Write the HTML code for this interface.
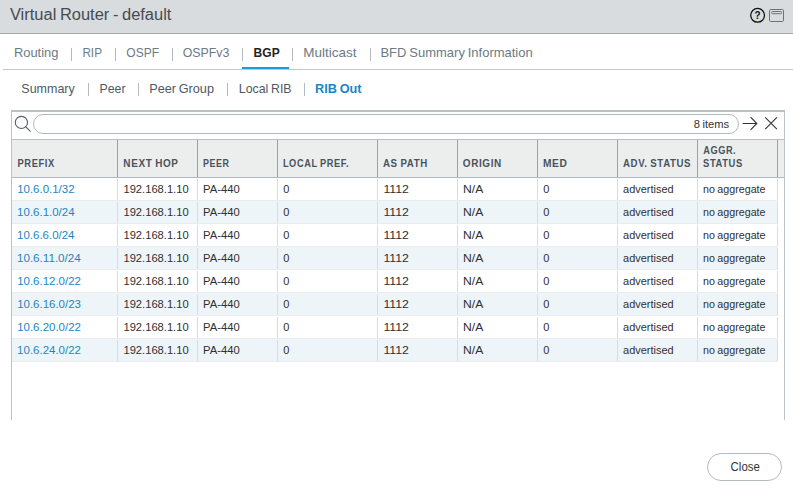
<!DOCTYPE html>
<html><head><meta charset="utf-8"><title>Virtual Router - default</title>
<style>
*{box-sizing:border-box;margin:0;padding:0}
html,body{width:793px;height:491px;overflow:hidden;background:#fff}
body{font-family:"Liberation Sans",sans-serif;position:relative;color:#222}
.a,.t,.s,.hs,.cs,.r{position:absolute}
.t{white-space:nowrap;transform-origin:0 0}
#hdr{left:0;top:0;width:793px;height:34px;background:#d8dcdf;border-bottom:1px solid #a3a9ae}
.s{width:1px;height:13px;background:#b3bac0}
#tabline{left:3px;top:69px;width:790px;height:1px;background:#c4c8cb}
#bgpline{left:242px;top:67px;width:47px;height:2px;background:#1a9cde}
#grid{left:11px;top:110px;width:774px;height:310px;border-left:1px solid #bcc3c8;border-right:1px solid #bcc3c8;border-top:2px solid #b9c0c6}
#tbline{left:12px;top:139px;width:772px;height:1px;background:#b9c0c6}
#search{left:33px;top:114px;width:706px;height:20px;border:1px solid #b3bac0;border-radius:10px}
#ghead{left:12px;top:140px;width:772px;height:38px;background:#eceeee;border-bottom:1px solid #b3b9be}
.hs{top:140px;width:1px;height:37px;background:#9aa0a6}
.r{left:12px;width:766px;height:22px;background:#eef5f9}
.cs{width:1px;height:21px;background:#d9dde0}
#close{left:707px;top:453px;width:75px;height:28px;border:1px solid #b3bac0;border-radius:14px}

</style></head><body>
<div id="hdr" class="a"></div>
<svg class="a" style="left:748px;top:6px" width="40" height="20" viewBox="0 0 40 20"><circle cx="9.6" cy="9.3" r="6.9" fill="none" stroke="#111" stroke-width="1.3"/><rect x="21.5" y="3.5" width="14" height="12" rx="1.2" fill="none" stroke="#6b7278" stroke-width="1"/><rect x="23.7" y="5.5" width="9.8" height="2.2" rx="0.8" fill="none" stroke="#6b7278" stroke-width="1"/></svg>
<div class="s" style="left:71px;top:48px"></div>
<div class="s" style="left:115px;top:48px"></div>
<div class="s" style="left:172px;top:48px"></div>
<div class="s" style="left:242px;top:48px"></div>
<div class="s" style="left:292px;top:48px"></div>
<div class="s" style="left:370px;top:48px"></div>
<div id="tabline" class="a"></div><div id="bgpline" class="a"></div>
<div class="s" style="left:88px;top:83px"></div>
<div class="s" style="left:138px;top:83px"></div>
<div class="s" style="left:227px;top:83px"></div>
<div class="s" style="left:304px;top:83px"></div>
<div id="grid" class="a"></div><div id="tbline" class="a"></div><div id="search" class="a"></div>
<svg class="a" style="left:12px;top:112px" width="24" height="26" viewBox="0 0 24 26"><circle cx="9.4" cy="10.4" r="6.1" fill="none" stroke="#58646e" stroke-width="1.15"/><path d="M13.8 14.8 L18.6 19.7" stroke="#58646e" stroke-width="1.15" fill="none"/></svg>
<svg class="a" style="left:740px;top:114px" width="42" height="20" viewBox="0 0 42 20"><path d="M2.7 9.5H16.6M10.6 3.2L16.8 9.5L10.6 15.8M25.2 3.4L36.9 15.1M36.9 3.4L25.2 15.1" stroke="#333" stroke-width="1.1" fill="none"/></svg>
<div id="ghead" class="a"></div>
<div class="r" style="top:200px;height:1px;background:#ececec"></div>
<div class="r" style="top:201px"></div>
<div class="r" style="top:223px;height:1px;background:#ececec"></div>
<div class="r" style="top:246px;height:1px;background:#ececec"></div>
<div class="r" style="top:247px"></div>
<div class="r" style="top:269px;height:1px;background:#ececec"></div>
<div class="r" style="top:292px;height:1px;background:#ececec"></div>
<div class="r" style="top:293px"></div>
<div class="r" style="top:315px;height:1px;background:#ececec"></div>
<div class="r" style="top:338px;height:1px;background:#ececec"></div>
<div class="r" style="top:339px"></div>
<div class="r" style="top:361px;height:1px;background:#ececec"></div>
<div class="hs" style="left:117px"></div>
<div class="cs" style="left:117px;top:179px"></div>
<div class="cs" style="left:117px;top:202px"></div>
<div class="cs" style="left:117px;top:225px"></div>
<div class="cs" style="left:117px;top:248px"></div>
<div class="cs" style="left:117px;top:271px"></div>
<div class="cs" style="left:117px;top:294px"></div>
<div class="cs" style="left:117px;top:317px"></div>
<div class="cs" style="left:117px;top:340px"></div>
<div class="hs" style="left:197px"></div>
<div class="cs" style="left:197px;top:179px"></div>
<div class="cs" style="left:197px;top:202px"></div>
<div class="cs" style="left:197px;top:225px"></div>
<div class="cs" style="left:197px;top:248px"></div>
<div class="cs" style="left:197px;top:271px"></div>
<div class="cs" style="left:197px;top:294px"></div>
<div class="cs" style="left:197px;top:317px"></div>
<div class="cs" style="left:197px;top:340px"></div>
<div class="hs" style="left:277px"></div>
<div class="cs" style="left:277px;top:179px"></div>
<div class="cs" style="left:277px;top:202px"></div>
<div class="cs" style="left:277px;top:225px"></div>
<div class="cs" style="left:277px;top:248px"></div>
<div class="cs" style="left:277px;top:271px"></div>
<div class="cs" style="left:277px;top:294px"></div>
<div class="cs" style="left:277px;top:317px"></div>
<div class="cs" style="left:277px;top:340px"></div>
<div class="hs" style="left:377px"></div>
<div class="cs" style="left:377px;top:179px"></div>
<div class="cs" style="left:377px;top:202px"></div>
<div class="cs" style="left:377px;top:225px"></div>
<div class="cs" style="left:377px;top:248px"></div>
<div class="cs" style="left:377px;top:271px"></div>
<div class="cs" style="left:377px;top:294px"></div>
<div class="cs" style="left:377px;top:317px"></div>
<div class="cs" style="left:377px;top:340px"></div>
<div class="hs" style="left:457px"></div>
<div class="cs" style="left:457px;top:179px"></div>
<div class="cs" style="left:457px;top:202px"></div>
<div class="cs" style="left:457px;top:225px"></div>
<div class="cs" style="left:457px;top:248px"></div>
<div class="cs" style="left:457px;top:271px"></div>
<div class="cs" style="left:457px;top:294px"></div>
<div class="cs" style="left:457px;top:317px"></div>
<div class="cs" style="left:457px;top:340px"></div>
<div class="hs" style="left:537px"></div>
<div class="cs" style="left:537px;top:179px"></div>
<div class="cs" style="left:537px;top:202px"></div>
<div class="cs" style="left:537px;top:225px"></div>
<div class="cs" style="left:537px;top:248px"></div>
<div class="cs" style="left:537px;top:271px"></div>
<div class="cs" style="left:537px;top:294px"></div>
<div class="cs" style="left:537px;top:317px"></div>
<div class="cs" style="left:537px;top:340px"></div>
<div class="hs" style="left:617px"></div>
<div class="cs" style="left:617px;top:179px"></div>
<div class="cs" style="left:617px;top:202px"></div>
<div class="cs" style="left:617px;top:225px"></div>
<div class="cs" style="left:617px;top:248px"></div>
<div class="cs" style="left:617px;top:271px"></div>
<div class="cs" style="left:617px;top:294px"></div>
<div class="cs" style="left:617px;top:317px"></div>
<div class="cs" style="left:617px;top:340px"></div>
<div class="hs" style="left:697px"></div>
<div class="cs" style="left:697px;top:179px"></div>
<div class="cs" style="left:697px;top:202px"></div>
<div class="cs" style="left:697px;top:225px"></div>
<div class="cs" style="left:697px;top:248px"></div>
<div class="cs" style="left:697px;top:271px"></div>
<div class="cs" style="left:697px;top:294px"></div>
<div class="cs" style="left:697px;top:317px"></div>
<div class="cs" style="left:697px;top:340px"></div>
<div class="hs" style="left:777px"></div>
<div class="cs" style="left:777px;top:179px"></div>
<div class="cs" style="left:777px;top:202px"></div>
<div class="cs" style="left:777px;top:225px"></div>
<div class="cs" style="left:777px;top:248px"></div>
<div class="cs" style="left:777px;top:271px"></div>
<div class="cs" style="left:777px;top:294px"></div>
<div class="cs" style="left:777px;top:317px"></div>
<div class="cs" style="left:777px;top:340px"></div>
<div id="close" class="a"></div>
<div class="t" id="title" style="left:10.50px;top:5px;font-size:16px;line-height:20px;color:#464b50;word-spacing:-0.96px;transform:translateX(-1.09px) scaleX(1.0293);">Virtual Router - default</div>
<div class="t" id="qq" style="left:754.20px;top:9px;font-size:11.5px;line-height:12px;color:#111;font-weight:bold;transform:translateX(0.5px) scaleX(.86);">?</div>
<div class="t" id="tab0" style="left:14.00px;top:45px;font-size:13px;line-height:16px;color:#6d7a86;transform:translateX(-0.01px) scaleX(0.9902);">Routing</div>
<div class="t" id="tab1" style="left:82.50px;top:45px;font-size:13.5px;line-height:16px;color:#6d7a86;transform:translateX(-0.61px) scaleX(0.8702);">RIP</div>
<div class="t" id="tab2" style="left:126.00px;top:45px;font-size:13.5px;line-height:16px;color:#6d7a86;transform:translateX(0.35px) scaleX(0.8874);">OSPF</div>
<div class="t" id="tab3" style="left:183.00px;top:45px;font-size:13px;line-height:16px;color:#6d7a86;transform:translateX(-0.26px) scaleX(0.9501);">OSPFv3</div>
<div class="t" id="tab4" style="left:253.60px;top:45px;font-size:13.5px;line-height:16px;color:#222;font-weight:bold;transform:translateX(-0.38px) scaleX(0.89);">BGP</div>
<div class="t" id="tab5" style="left:303.40px;top:45px;font-size:13px;line-height:16px;color:#6d7a86;transform:translateX(0.35px) scaleX(1.0381);">Multicast</div>
<div class="t" id="tab6" style="left:381.00px;top:45px;font-size:13px;line-height:16px;color:#6d7a86;word-spacing:-0.78px;transform:translateX(-0.55px) scaleX(0.9997);">BFD Summary Information</div>
<div class="t" id="sub0" style="left:22.00px;top:81px;font-size:13px;line-height:16px;color:#4d5a66;transform:translateX(-0.67px) scaleX(0.961);">Summary</div>
<div class="t" id="sub1" style="left:99.60px;top:81px;font-size:13px;line-height:16px;color:#4d5a66;transform:translateX(-0.42px) scaleX(0.9443);">Peer</div>
<div class="t" id="sub2" style="left:149.50px;top:81px;font-size:13px;line-height:16px;color:#4d5a66;word-spacing:-0.78px;transform:translateX(-0.81px) scaleX(0.9746);">Peer Group</div>
<div class="t" id="sub3" style="left:238.30px;top:81px;font-size:13px;line-height:16px;color:#4d5a66;word-spacing:-0.78px;transform:translateX(0.76px) scaleX(0.9503);">Local RIB</div>
<div class="t" id="sub4" style="left:315.00px;top:81px;font-size:13px;line-height:16px;color:#1b86c4;font-weight:bold;word-spacing:-0.78px;transform:translateX(0.0px) scaleX(0.9774);">RIB Out</div>
<div class="t" id="items" style="left:693.62px;top:114px;font-size:11px;line-height:20px;color:#333;word-spacing:-0.66px;transform:translateX(-0.24px) scaleX(1.0166);">8 items</div>
<div class="t" id="h0" style="left:17.50px;top:157px;font-size:10px;line-height:13px;color:#4a545e;font-weight:bold;letter-spacing:0.62px;transform:translateX(-0.54px) scaleX(0.9383);">PREFIX</div>
<div class="t" id="h1" style="left:123.00px;top:157px;font-size:10px;line-height:13px;color:#4a545e;font-weight:bold;letter-spacing:0.62px;word-spacing:-0.6px;transform:translateX(0.36px) scaleX(0.9954);">NEXT HOP</div>
<div class="t" id="h2" style="left:203.00px;top:157px;font-size:10px;line-height:13px;color:#4a545e;font-weight:bold;letter-spacing:0.62px;transform:translateX(0px) scaleX(0.8931);">PEER</div>
<div class="t" id="h3" style="left:283.00px;top:157px;font-size:10px;line-height:13px;color:#4a545e;font-weight:bold;letter-spacing:0.62px;word-spacing:-0.6px;transform:translateX(-0.11px) scaleX(0.9249);">LOCAL PREF.</div>
<div class="t" id="h4" style="left:383.00px;top:157px;font-size:10px;line-height:13px;color:#4a545e;font-weight:bold;letter-spacing:0.62px;word-spacing:-0.6px;transform:translateX(0px) scaleX(0.9712);">AS PATH</div>
<div class="t" id="h5" style="left:463.00px;top:157px;font-size:10px;line-height:13px;color:#4a545e;font-weight:bold;letter-spacing:0.62px;transform:translateX(-0.23px) scaleX(0.9964);">ORIGIN</div>
<div class="t" id="h6" style="left:543.00px;top:157px;font-size:10px;line-height:13px;color:#4a545e;font-weight:bold;letter-spacing:0.62px;transform:translateX(-0.11px) scaleX(1.0246);">MED</div>
<div class="t" id="h7" style="left:623.00px;top:157px;font-size:10px;line-height:13px;color:#4a545e;font-weight:bold;letter-spacing:0.62px;word-spacing:-0.6px;transform:translateX(0.02px) scaleX(0.9658);">ADV. STATUS</div>
<div class="t" id="h8" style="left:703.00px;top:144px;font-size:10px;line-height:13px;color:#4a545e;font-weight:bold;letter-spacing:0.62px;transform:translateX(0.15px) scaleX(0.9225);">AGGR.</div>
<div class="t" id="h9" style="left:703.00px;top:157px;font-size:10px;line-height:13px;color:#4a545e;font-weight:bold;letter-spacing:0.62px;transform:translateX(0.11px) scaleX(0.9377);">STATUS</div>
<div class="t" id="p0" style="left:17.20px;top:178px;font-size:11px;line-height:22px;color:#1b86c4;transform:translateX(0.16px) scaleX(1.0428);">10.6.0.1/32</div>
<div class="t c1" style="left:123.00px;top:178px;font-size:11px;line-height:22px;color:#303030;transform:translateX(0.43px) scaleX(1.0153);">192.168.1.10</div>
<div class="t c2" style="left:203.00px;top:178px;font-size:11px;line-height:22px;color:#303030;transform:translateX(0px) scaleX(1.024);">PA-440</div>
<div class="t c3" style="left:283.00px;top:178px;font-size:11px;line-height:22px;color:#303030;transform:translateX(0.16px) scaleX(1);">0</div>
<div class="t c4" style="left:383.00px;top:178px;font-size:11px;line-height:22px;color:#303030;transform:translateX(0.38px) scaleX(1.1176);">1112</div>
<div class="t c5" style="left:463.00px;top:178px;font-size:11px;line-height:22px;color:#303030;transform:translateX(0.05px) scaleX(1.1014);">N/A</div>
<div class="t c6" style="left:543.00px;top:178px;font-size:11px;line-height:22px;color:#303030;transform:translateX(0.16px) scaleX(1);">0</div>
<div class="t c7" style="left:623.00px;top:178px;font-size:11px;line-height:22px;color:#303030;transform:translateX(0.09px) scaleX(0.9942);">advertised</div>
<div class="t c8" style="left:703.00px;top:178px;font-size:11px;line-height:22px;color:#303030;word-spacing:-0.66px;transform:translateX(0.03px) scaleX(0.974);">no aggregate</div>
<div class="t" id="p1" style="left:17.20px;top:201px;font-size:11px;line-height:22px;color:#1b86c4;transform:translateX(0.12px) scaleX(1.0428);">10.6.1.0/24</div>
<div class="t c1" style="left:123.00px;top:201px;font-size:11px;line-height:22px;color:#303030;transform:translateX(0.43px) scaleX(1.0153);">192.168.1.10</div>
<div class="t c2" style="left:203.00px;top:201px;font-size:11px;line-height:22px;color:#303030;transform:translateX(0px) scaleX(1.024);">PA-440</div>
<div class="t c3" style="left:283.00px;top:201px;font-size:11px;line-height:22px;color:#303030;transform:translateX(0.16px) scaleX(1);">0</div>
<div class="t c4" style="left:383.00px;top:201px;font-size:11px;line-height:22px;color:#303030;transform:translateX(0.38px) scaleX(1.1176);">1112</div>
<div class="t c5" style="left:463.00px;top:201px;font-size:11px;line-height:22px;color:#303030;transform:translateX(0.05px) scaleX(1.1014);">N/A</div>
<div class="t c6" style="left:543.00px;top:201px;font-size:11px;line-height:22px;color:#303030;transform:translateX(0.16px) scaleX(1);">0</div>
<div class="t c7" style="left:623.00px;top:201px;font-size:11px;line-height:22px;color:#303030;transform:translateX(0.09px) scaleX(0.9942);">advertised</div>
<div class="t c8" style="left:703.00px;top:201px;font-size:11px;line-height:22px;color:#303030;word-spacing:-0.66px;transform:translateX(0.03px) scaleX(0.974);">no aggregate</div>
<div class="t" id="p2" style="left:17.20px;top:224px;font-size:11px;line-height:22px;color:#1b86c4;transform:translateX(0.08px) scaleX(1.0428);">10.6.6.0/24</div>
<div class="t c1" style="left:123.00px;top:224px;font-size:11px;line-height:22px;color:#303030;transform:translateX(0.43px) scaleX(1.0153);">192.168.1.10</div>
<div class="t c2" style="left:203.00px;top:224px;font-size:11px;line-height:22px;color:#303030;transform:translateX(0px) scaleX(1.024);">PA-440</div>
<div class="t c3" style="left:283.00px;top:224px;font-size:11px;line-height:22px;color:#303030;transform:translateX(0.16px) scaleX(1);">0</div>
<div class="t c4" style="left:383.00px;top:224px;font-size:11px;line-height:22px;color:#303030;transform:translateX(0.38px) scaleX(1.1176);">1112</div>
<div class="t c5" style="left:463.00px;top:224px;font-size:11px;line-height:22px;color:#303030;transform:translateX(0.05px) scaleX(1.1014);">N/A</div>
<div class="t c6" style="left:543.00px;top:224px;font-size:11px;line-height:22px;color:#303030;transform:translateX(0.16px) scaleX(1);">0</div>
<div class="t c7" style="left:623.00px;top:224px;font-size:11px;line-height:22px;color:#303030;transform:translateX(0.09px) scaleX(0.9942);">advertised</div>
<div class="t c8" style="left:703.00px;top:224px;font-size:11px;line-height:22px;color:#303030;word-spacing:-0.66px;transform:translateX(0.03px) scaleX(0.974);">no aggregate</div>
<div class="t" id="p3" style="left:17.20px;top:247px;font-size:11px;line-height:22px;color:#1b86c4;transform:translateX(-0.05px) scaleX(1.0572);">10.6.11.0/24</div>
<div class="t c1" style="left:123.00px;top:247px;font-size:11px;line-height:22px;color:#303030;transform:translateX(0.43px) scaleX(1.0153);">192.168.1.10</div>
<div class="t c2" style="left:203.00px;top:247px;font-size:11px;line-height:22px;color:#303030;transform:translateX(0px) scaleX(1.024);">PA-440</div>
<div class="t c3" style="left:283.00px;top:247px;font-size:11px;line-height:22px;color:#303030;transform:translateX(0.16px) scaleX(1);">0</div>
<div class="t c4" style="left:383.00px;top:247px;font-size:11px;line-height:22px;color:#303030;transform:translateX(0.38px) scaleX(1.1176);">1112</div>
<div class="t c5" style="left:463.00px;top:247px;font-size:11px;line-height:22px;color:#303030;transform:translateX(0.05px) scaleX(1.1014);">N/A</div>
<div class="t c6" style="left:543.00px;top:247px;font-size:11px;line-height:22px;color:#303030;transform:translateX(0.16px) scaleX(1);">0</div>
<div class="t c7" style="left:623.00px;top:247px;font-size:11px;line-height:22px;color:#303030;transform:translateX(0.09px) scaleX(0.9942);">advertised</div>
<div class="t c8" style="left:703.00px;top:247px;font-size:11px;line-height:22px;color:#303030;word-spacing:-0.66px;transform:translateX(0.03px) scaleX(0.974);">no aggregate</div>
<div class="t" id="p4" style="left:17.20px;top:270px;font-size:11px;line-height:22px;color:#1b86c4;transform:translateX(0.14px) scaleX(1.0432);">10.6.12.0/22</div>
<div class="t c1" style="left:123.00px;top:270px;font-size:11px;line-height:22px;color:#303030;transform:translateX(0.43px) scaleX(1.0153);">192.168.1.10</div>
<div class="t c2" style="left:203.00px;top:270px;font-size:11px;line-height:22px;color:#303030;transform:translateX(0px) scaleX(1.024);">PA-440</div>
<div class="t c3" style="left:283.00px;top:270px;font-size:11px;line-height:22px;color:#303030;transform:translateX(0.16px) scaleX(1);">0</div>
<div class="t c4" style="left:383.00px;top:270px;font-size:11px;line-height:22px;color:#303030;transform:translateX(0.38px) scaleX(1.1176);">1112</div>
<div class="t c5" style="left:463.00px;top:270px;font-size:11px;line-height:22px;color:#303030;transform:translateX(0.05px) scaleX(1.1014);">N/A</div>
<div class="t c6" style="left:543.00px;top:270px;font-size:11px;line-height:22px;color:#303030;transform:translateX(0.16px) scaleX(1);">0</div>
<div class="t c7" style="left:623.00px;top:270px;font-size:11px;line-height:22px;color:#303030;transform:translateX(0.09px) scaleX(0.9942);">advertised</div>
<div class="t c8" style="left:703.00px;top:270px;font-size:11px;line-height:22px;color:#303030;word-spacing:-0.66px;transform:translateX(0.03px) scaleX(0.974);">no aggregate</div>
<div class="t" id="p5" style="left:17.20px;top:293px;font-size:11px;line-height:22px;color:#1b86c4;transform:translateX(0.13px) scaleX(1.0432);">10.6.16.0/23</div>
<div class="t c1" style="left:123.00px;top:293px;font-size:11px;line-height:22px;color:#303030;transform:translateX(0.43px) scaleX(1.0153);">192.168.1.10</div>
<div class="t c2" style="left:203.00px;top:293px;font-size:11px;line-height:22px;color:#303030;transform:translateX(0px) scaleX(1.024);">PA-440</div>
<div class="t c3" style="left:283.00px;top:293px;font-size:11px;line-height:22px;color:#303030;transform:translateX(0.16px) scaleX(1);">0</div>
<div class="t c4" style="left:383.00px;top:293px;font-size:11px;line-height:22px;color:#303030;transform:translateX(0.38px) scaleX(1.1176);">1112</div>
<div class="t c5" style="left:463.00px;top:293px;font-size:11px;line-height:22px;color:#303030;transform:translateX(0.05px) scaleX(1.1014);">N/A</div>
<div class="t c6" style="left:543.00px;top:293px;font-size:11px;line-height:22px;color:#303030;transform:translateX(0.16px) scaleX(1);">0</div>
<div class="t c7" style="left:623.00px;top:293px;font-size:11px;line-height:22px;color:#303030;transform:translateX(0.09px) scaleX(0.9942);">advertised</div>
<div class="t c8" style="left:703.00px;top:293px;font-size:11px;line-height:22px;color:#303030;word-spacing:-0.66px;transform:translateX(0.03px) scaleX(0.974);">no aggregate</div>
<div class="t" id="p6" style="left:17.20px;top:316px;font-size:11px;line-height:22px;color:#1b86c4;transform:translateX(0.15px) scaleX(1.0432);">10.6.20.0/22</div>
<div class="t c1" style="left:123.00px;top:316px;font-size:11px;line-height:22px;color:#303030;transform:translateX(0.43px) scaleX(1.0153);">192.168.1.10</div>
<div class="t c2" style="left:203.00px;top:316px;font-size:11px;line-height:22px;color:#303030;transform:translateX(0px) scaleX(1.024);">PA-440</div>
<div class="t c3" style="left:283.00px;top:316px;font-size:11px;line-height:22px;color:#303030;transform:translateX(0.16px) scaleX(1);">0</div>
<div class="t c4" style="left:383.00px;top:316px;font-size:11px;line-height:22px;color:#303030;transform:translateX(0.38px) scaleX(1.1176);">1112</div>
<div class="t c5" style="left:463.00px;top:316px;font-size:11px;line-height:22px;color:#303030;transform:translateX(0.05px) scaleX(1.1014);">N/A</div>
<div class="t c6" style="left:543.00px;top:316px;font-size:11px;line-height:22px;color:#303030;transform:translateX(0.16px) scaleX(1);">0</div>
<div class="t c7" style="left:623.00px;top:316px;font-size:11px;line-height:22px;color:#303030;transform:translateX(0.09px) scaleX(0.9942);">advertised</div>
<div class="t c8" style="left:703.00px;top:316px;font-size:11px;line-height:22px;color:#303030;word-spacing:-0.66px;transform:translateX(0.03px) scaleX(0.974);">no aggregate</div>
<div class="t" id="p7" style="left:17.20px;top:339px;font-size:11px;line-height:22px;color:#1b86c4;transform:translateX(0.12px) scaleX(1.0432);">10.6.24.0/22</div>
<div class="t c1" style="left:123.00px;top:339px;font-size:11px;line-height:22px;color:#303030;transform:translateX(0.43px) scaleX(1.0153);">192.168.1.10</div>
<div class="t c2" style="left:203.00px;top:339px;font-size:11px;line-height:22px;color:#303030;transform:translateX(0px) scaleX(1.024);">PA-440</div>
<div class="t c3" style="left:283.00px;top:339px;font-size:11px;line-height:22px;color:#303030;transform:translateX(0.16px) scaleX(1);">0</div>
<div class="t c4" style="left:383.00px;top:339px;font-size:11px;line-height:22px;color:#303030;transform:translateX(0.38px) scaleX(1.1176);">1112</div>
<div class="t c5" style="left:463.00px;top:339px;font-size:11px;line-height:22px;color:#303030;transform:translateX(0.05px) scaleX(1.1014);">N/A</div>
<div class="t c6" style="left:543.00px;top:339px;font-size:11px;line-height:22px;color:#303030;transform:translateX(0.16px) scaleX(1);">0</div>
<div class="t c7" style="left:623.00px;top:339px;font-size:11px;line-height:22px;color:#303030;transform:translateX(0.09px) scaleX(0.9942);">advertised</div>
<div class="t c8" style="left:703.00px;top:339px;font-size:11px;line-height:22px;color:#303030;word-spacing:-0.66px;transform:translateX(0.03px) scaleX(0.974);">no aggregate</div>
<div class="t" id="closet" style="left:730.80px;top:453px;font-size:12px;line-height:28px;color:#333;transform:translateX(-0.39px) scaleX(0.9511);">Close</div>
</body></html>
